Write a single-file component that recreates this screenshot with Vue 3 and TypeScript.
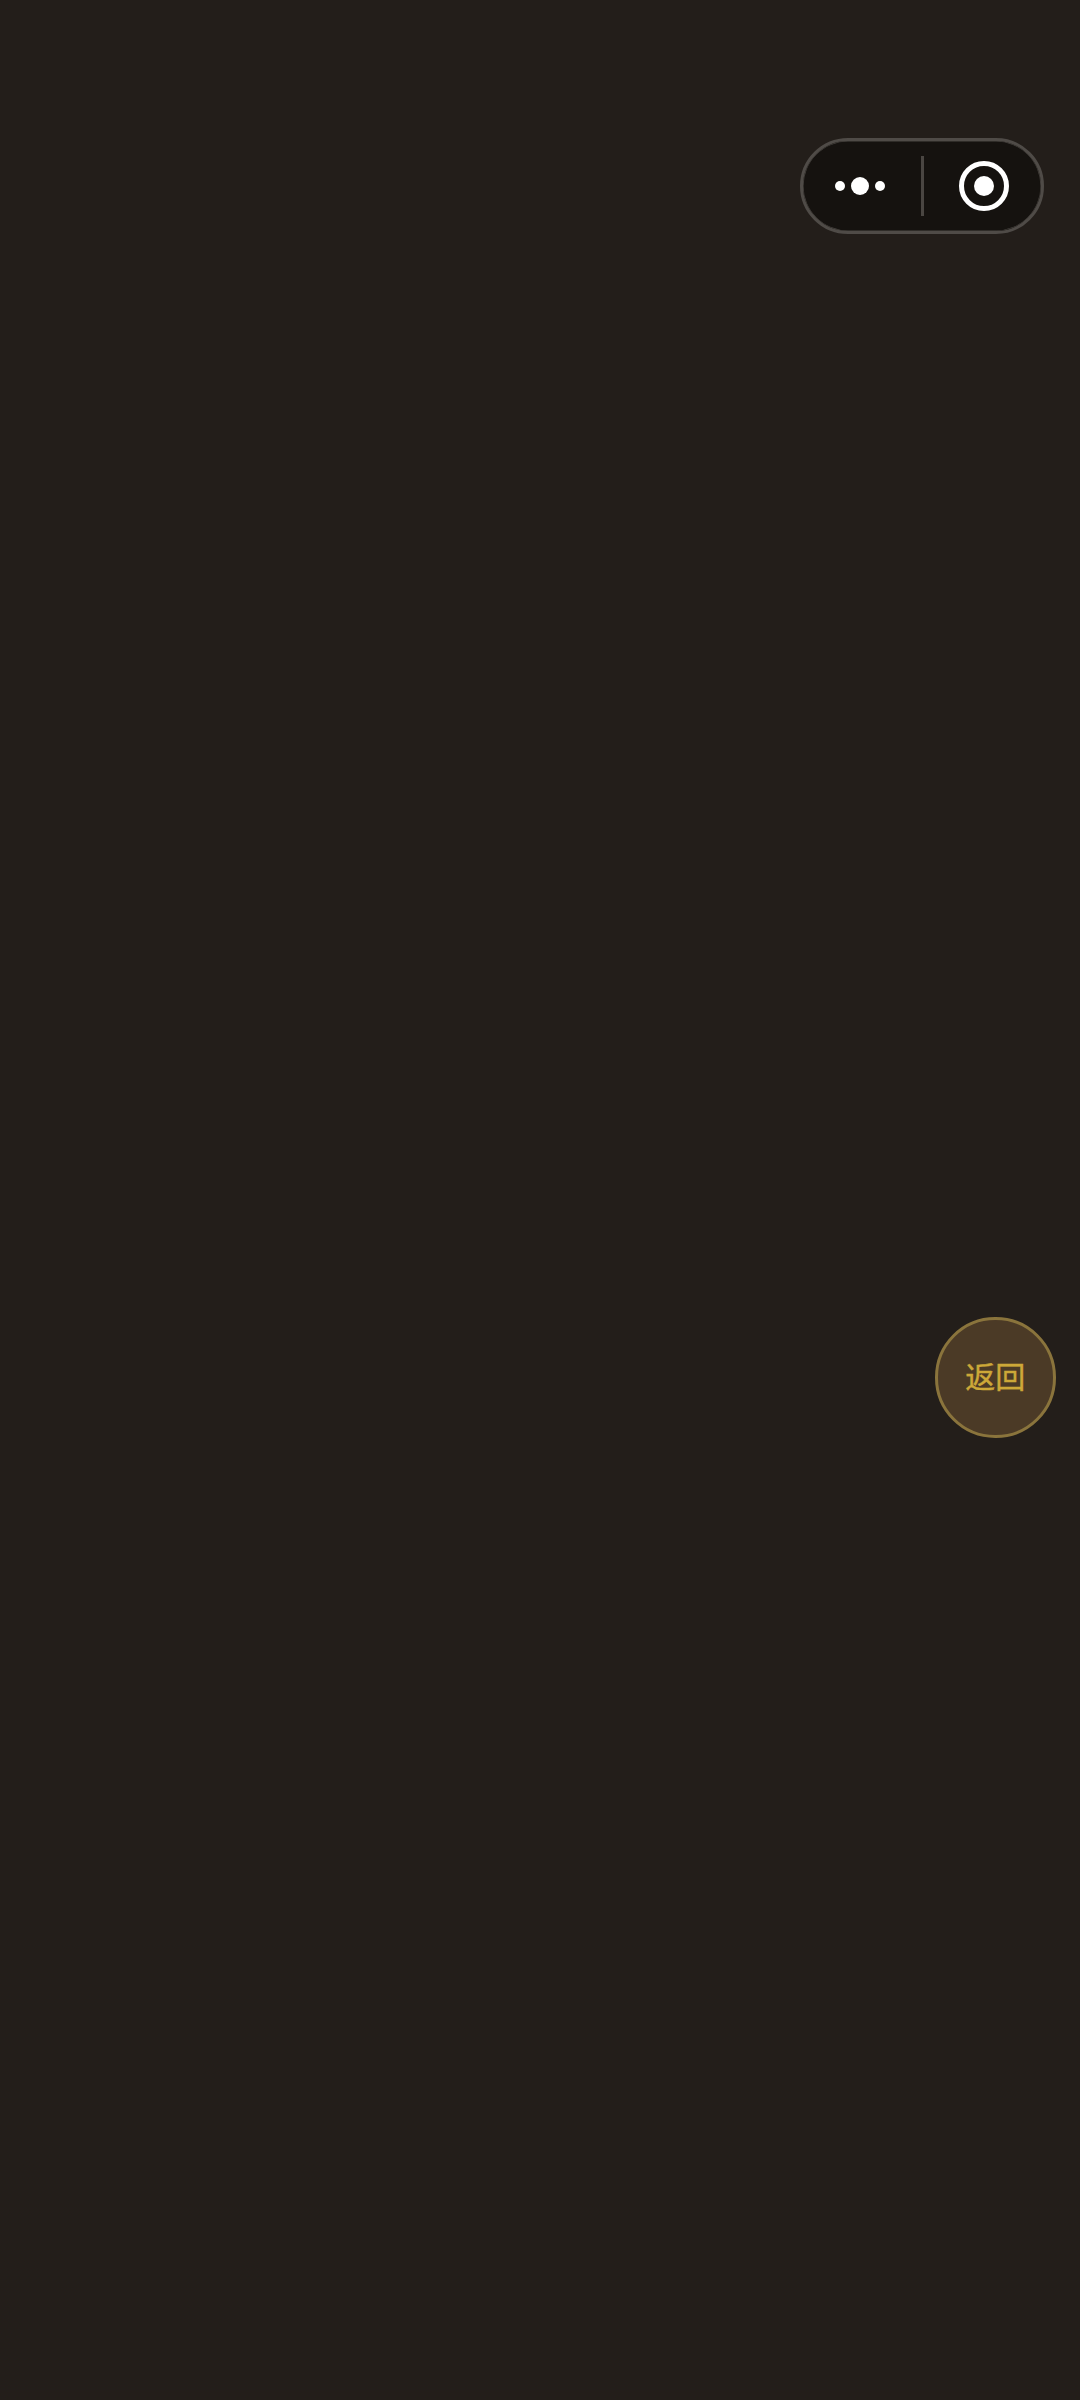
<script setup lang="ts">
const label: string = '返回'
</script>

<template>
  <div class="page">
    <div class="capsule">
      <div class="capsule-side capsule-more">
        <span class="dots">
          <i class="dot"></i>
          <i class="dot dot-large"></i>
          <i class="dot"></i>
        </span>
      </div>
      <span class="divider"></span>
      <div class="capsule-side capsule-close">
        <span class="ring"><i class="ring-core"></i></span>
      </div>
    </div>
    <button class="back" type="button"><span class="back-label">{{ label }}</span></button>
  </div>
</template>

<style>
html,
body {
  margin: 0;
  background: #231e1a;
}
</style>

<style scoped>
.page {
  position: relative;
  width: 1080px;
  height: 2400px;
  background: #231e1a;
  overflow: hidden;
}
.capsule {
  position: absolute;
  top: 138px;
  left: 800px;
  box-sizing: border-box;
  width: 244px;
  height: 96px;
  display: flex;
  align-items: center;
  background: #15120f;
  border: 3px solid #4f4b47;
  border-radius: 48px;
  box-shadow: inset 0 0 0 0.5px #4a4642;
}
.capsule-side {
  box-sizing: border-box;
  flex: 1 1 0;
  display: flex;
  align-items: center;
  justify-content: center;
}
.capsule-more {
  padding-right: 2px;
}
.capsule-close {
  padding-left: 3px;
}
.divider {
  width: 3px;
  height: 60px;
  margin-left: 1px;
  background: #4a4642;
}
.dots {
  display: flex;
  align-items: center;
  gap: 6px;
}
.dot {
  display: block;
  width: 10px;
  height: 10px;
  border-radius: 50%;
  background: #fff;
}
.dot-large {
  width: 18px;
  height: 18px;
}
.ring {
  box-sizing: border-box;
  width: 50px;
  height: 50px;
  display: flex;
  align-items: center;
  justify-content: center;
  border: 5px solid #fff;
  border-radius: 50%;
}
.ring-core {
  display: block;
  width: 20px;
  height: 20px;
  border-radius: 50%;
  background: #fff;
}
.back {
  position: absolute;
  top: 1317px;
  left: 935px;
  box-sizing: border-box;
  width: 120.5px;
  height: 120.5px;
  padding: 0 0 5px;
  display: flex;
  align-items: center;
  justify-content: center;
  background: #4b3a26;
  border: 3px solid #8a743c;
  border-radius: 50%;
  color: #cda838;
  font-family: "Noto Sans CJK SC", "Liberation Sans", sans-serif;
  font-size: 30px;
  font-weight: 400;
  line-height: 1;
  -webkit-text-stroke: 0.4px #cda838;
}
</style>
